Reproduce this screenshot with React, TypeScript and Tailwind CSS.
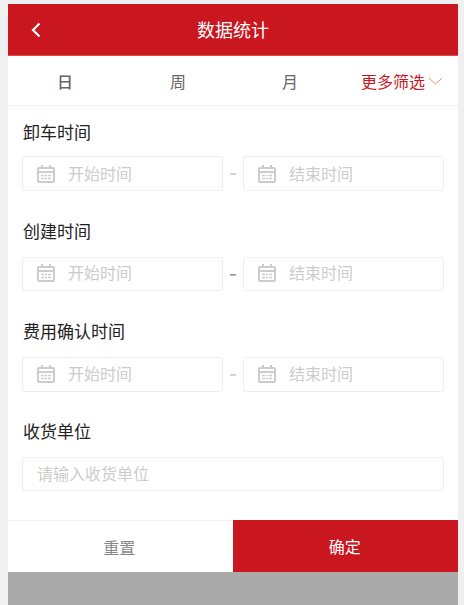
const font = '[font-family:"Noto_Sans_CJK_SC",sans-serif]'

const CalendarIcon = ({ raised }: { raised?: boolean }) => (
  <svg width="18" height="18" viewBox="0 0 18 18" fill="none" stroke="#cccccc" strokeWidth="2" className={raised ? 'shrink-0 -translate-y-px' : 'shrink-0'}>
    <rect x="1" y="3" width="16" height="14" rx="1" />
    <path d="M5 0v4M13 0v4M1 7h16" />
    <path d="M4 10.5h3M8 10.5h2M11 10.5h3M4 13.5h3M8 13.5h2M11 13.5h3" strokeWidth="1.4" />
  </svg>
)

const DateInput = ({ text, short, first }: { text: string; short?: boolean; first?: boolean }) => (
  <div className={`flex w-[201px] items-center rounded-[3px] border border-[#eeeeee] bg-white pl-[14px] ${short ? 'h-[34px]' : 'h-[35px]'}`}>
    <CalendarIcon raised={!first} />
    <span className={`ml-[13px] text-[16px] text-[#cccccc] ${first ? '-translate-y-px' : '-translate-y-[2px]'}`}>{text}</span>
  </div>
)

const DateRange = ({ label, first, short }: { label: string; first?: boolean; short?: boolean }) => (
  <div className={`h-[100px] ${first ? 'pt-[13px]' : 'pt-[12px]'}`}>
    <div className="h-[25px] pl-px text-[17px] leading-[25px] text-[#222222]">{label}</div>
    <div className={`flex items-center justify-between ${first ? 'mt-[12px]' : 'mt-[14px]'}`}>
      <DateInput text="开始时间" short={short} first={first} />
      <span className={`-translate-y-[3px] text-[23px] leading-none ${short ? 'text-[#999999]' : 'text-[#cccccc]'}`}>-</span>
      <DateInput text="结束时间" short={short} first={first} />
    </div>
  </div>
)

export default function App() {
  return (
    <div className={`h-[605px] w-[464px] overflow-hidden bg-[#f0f0f0] pt-[4px] pl-[8px] ${font}`}>
      <div className="flex h-[601px] w-[450px] flex-col bg-white">
        <header className="relative flex h-[52px] items-center justify-center border-b border-[#e04b50] bg-[#c9161f] text-[18px] text-white">
          <svg width="12" height="16" viewBox="0 0 12 16" fill="none" stroke="white" strokeWidth="2.2" className="absolute top-[18px] left-[22px]">
            <path d="M9.5 1.5 3 8l6.5 6.5" />
          </svg>
          数据统计
        </header>

        <div className="flex h-[50px] items-center border-b border-[#eeeeee] text-[16px] text-[#666666]">
          <div className="w-[114px] text-center font-medium">日</div>
          <div className="w-[112px] text-center">周</div>
          <div className="w-[112px] text-center">月</div>
          <div className="flex flex-1 items-center pl-[15px] text-[16px] text-[#c9161f]">
            更多筛选
            <svg width="15" height="8" viewBox="0 0 15 8" fill="none" stroke="#e0918f" strokeWidth="1" className="ml-[3px]">
              <path d="M1 1l6.5 6 6.5-6" />
            </svg>
          </div>
        </div>

        <div className="flex-1 pl-[14px] pr-[14px]">
          <DateRange label="卸车时间" first />
          <DateRange label="创建时间" short />
          <DateRange label="费用确认时间" />
          <div className="pt-[12px]">
            <div className="h-[25px] pl-px text-[17px] leading-[25px] text-[#222222]">收货单位</div>
            <div className="mt-[14px] flex h-[34px] items-center rounded-[3px] border border-[#eeeeee] pl-[14px] text-[16px] text-[#cccccc]">
              <span className="-translate-y-px">请输入收货单位</span>
            </div>
          </div>
        </div>

        <div className="flex h-[52px] border-t border-[#f2f2f2] text-[16px]">
          <button className="flex-1 -translate-x-px text-[#888888]">重置</button>
          <button className="-mt-px flex-1 bg-[#c9161f] pr-px text-white">确定</button>
        </div>
        <div className="h-[33px] bg-[#aaaaaa]" />
      </div>
    </div>
  )
}
